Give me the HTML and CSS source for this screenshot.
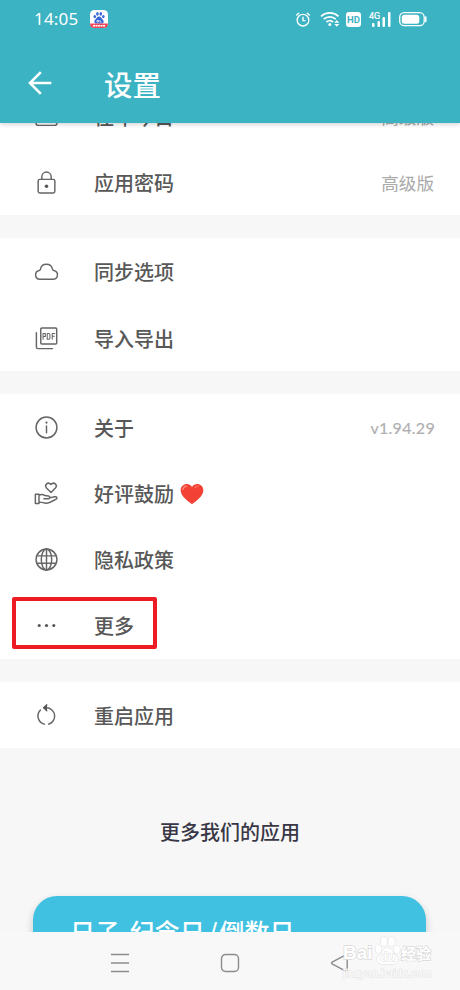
FILE: index.html
```html
<!DOCTYPE html>
<html lang="zh-CN">

<head>
    <meta charset="UTF-8">
    <meta name="viewport" content="width=device-width, initial-scale=1.0">
    <title>设置</title>
    <link rel="stylesheet" href="styles.css">
</head>

<body>
    <header class="header">
        <div class="status-bar">
            <span class="time">14:05</span>
            <svg class="app-badge" width="18" height="18" viewBox="0 0 18 18">
                <rect width="18" height="18" rx="4.5" fill="#fff" />
                <g fill="#3767d8">
                    <ellipse cx="4.8" cy="6.6" rx="1.3" ry="1.7" />
                    <ellipse cx="7.4" cy="3.9" rx="1.3" ry="1.8" />
                    <ellipse cx="10.8" cy="3.9" rx="1.3" ry="1.8" />
                    <ellipse cx="13.3" cy="6.6" rx="1.3" ry="1.7" />
                    <path d="M9 6.5c2 0 2.5 2 4 3.400 1.400 1.600.5 3.600-1.500 3.600h-5c-2 0-2.900-2-1.500-3.600C6.500 8.500 7 6.500 9 6.500z" />
                </g>
                <path d="M7 10.500h1.500v1.500H7zM10 10v2h1.500" fill="none" stroke="#fff" stroke-width=".7" />
                <path d="M0 13.500h18c0 3-1.500 4.500-4.500 4.500h-9C1.500 18 0 16.500 0 13.500z" fill="#f0475b" />
                <path d="M3 15.700h12" stroke="#fff" stroke-width="1.600" stroke-dasharray="2 .5" />
            </svg>
            <div class="status-icons">
                <svg class="alarm" width="16" height="18" viewBox="0 0 16 18" fill="none" stroke="#fff" stroke-width="1.400" stroke-linecap="round">
                    <circle cx="8" cy="10.200" r="5.800" />
                    <path d="M8 7.200v3.400h2M1.700 5l2-1.800M14.300 5l-2-1.800" />
                </svg>
                <svg class="wifi" width="21" height="18" viewBox="0 0 21 18" fill="none" stroke="#fff" stroke-width="1.700">
                    <path d="M1 6.300c5-4.500 12.500-4.500 17.500 0M3.700 9.200c3.500-3.200 8.600-3.200 12.100 0M6.500 12c1.900-1.700 4.700-1.700 6.600 0" />
                    <circle cx="9.800" cy="14.600" r="1.500" fill="#fff" stroke="none" />
                    <path d="M14.300 12.800l2.500-2.700 2.500 2.700zM14.300 14l2.500 2.700 2.500-2.700z" fill="#fff" stroke="none" />
                </svg>
                <span class="hd">HD</span>
                <svg class="signal" width="22" height="18" viewBox="0 0 22 18" fill="#fff">
                    <text x="0" y="9" class="signal-text">4G</text>
                    <rect x="3" y="13" width="2.500" height="4" rx="1" />
                    <rect x="8.500" y="11" width="2.500" height="6" rx="1" />
                    <rect x="13.500" y="7" width="2.500" height="10" rx="1" />
                    <rect x="19" y="2" width="2.500" height="15" rx="1" />
                </svg>
                <svg width="28" height="18" viewBox="0 0 28 18">
                    <rect x=".7" y="2.700" width="24.500" height="13" rx="4.500" fill="none" stroke="#fff" stroke-width="1.300" />
                    <rect x="2.800" y="4.700" width="17.500" height="9" rx="2.500" fill="#fff" />
                    <path d="M26.800 7v4.500" stroke="#fff" stroke-width="1.500" stroke-linecap="round" />
                </svg>
            </div>
        </div>
        <div class="toolbar">
            <svg width="24" height="24" viewBox="0 0 24 24" fill="none" stroke="#fff" stroke-width="2.600">
                <path d="M23.300 12H2M12.800 1.200L2 12l10.800 10.800" />
            </svg>
            <h1>设置</h1>
        </div>
    </header>

    <main class="content">
        <section class="group first">
            <div class="row">
                <svg class="icon" viewBox="0 0 24 24">
                    <rect x="2" y="2.500" width="20" height="18" rx="2" />
                    <path d="M2 8h20" />
                </svg>
                <span class="label">往年今日</span>
                <span class="value">高级版</span>
            </div>
            <div class="row">
                <svg class="icon" viewBox="0 0 24 24">
                    <rect x="4" y="9" width="16" height="13" rx="1.500" />
                    <path d="M7.500 9V6.500a4.500 4.500 0 0 1 9 0V9" />
                    <circle class="solid" cx="12" cy="15.500" r="1.700" />
                </svg>
                <span class="label">应用密码</span>
                <span class="value">高级版</span>
            </div>
        </section>

        <section class="group">
            <div class="row">
                <svg class="icon" viewBox="0 0 24 24">
                    <path d="M5.500 19.500h13.200a4.300 4.300 0 0 0 .3-8.500 1.600 1.600 0 0 1-1.300-1.300 5.900 5.900 0 0 0-11.500 0A1.600 1.600 0 0 1 5 11a4.300 4.300 0 0 0 .5 8.500z" />
                </svg>
                <span class="label">同步选项</span>
            </div>
            <div class="row">
                <svg class="icon" viewBox="0 0 24 24">
                    <rect x="6.500" y="2" width="15.300" height="15.300" rx="1" />
                    <path d="M2.300 6.500v13.700q0 1.500 1.500 1.500h14" />
                    <path class="thin" d="M8.700 12.800V7.200h2.200v2.800H8.700M12.700 7.200h1.300q1.300 0 1.300 1.300v3q0 1.300-1.300 1.300h-1.300zM17.500 12.800V7.200h2.500M17.500 9.800h2" />
                </svg>
                <span class="label">导入导出</span>
            </div>
        </section>

        <section class="group">
            <div class="row">
                <svg class="icon" viewBox="0 0 24 24">
                    <circle cx="12" cy="12" r="10" />
                    <path d="M12 10.500v6.500" />
                    <circle class="solid" cx="12" cy="7.300" r="1" />
                </svg>
                <span class="label">关于</span>
                <span class="value version">v1.94.29</span>
            </div>
            <div class="row">
                <svg class="icon" viewBox="0 0 24 24">
                    <path d="M16.300 11l-4.500-4.600c-2-2.400 1.500-6.300 4.500-3 3-3.300 6.500.6 4.500 3z" />
                    <path d="M1.300 12.800h3.500v8.700H1.300zM4.800 13.800c2-1.300 4-1 5.700.2l3.300.4c2 .3 2 2.600 0 2.600H9.500M14.800 16.200l5-1.100c2.300-.4 3 1.700 1.200 2.500-3.800 2.200-6.700 3.900-9.600 3.700-2.400-.2-4-1.300-6.600-1" />
                </svg>
                <span class="label">好评鼓励</span>
                <svg class="heart" width="24" height="22" viewBox="0 0 24 22">
                    <path d="M12 21.300C8.500 18.200.7 13.600.7 7.200.7 1 8.600-1.200 12 4c3.400-5.200 11.300-3 11.300 3.200 0 6.400-7.800 11-11.300 14.100z" fill="#f34235" />
                    <path d="M3 6.500c.3-2 1.500-3.200 3.300-3.200" fill="none" stroke="#ff8177" stroke-width="1.600" stroke-linecap="round" />
                    <path d="M15 4.800c1-1.300 2-1.700 3.300-1.700" fill="none" stroke="#ff6f64" stroke-width="1.400" stroke-linecap="round" />
                </svg>
            </div>
            <div class="row">
                <svg class="icon" viewBox="0 0 24 24">
                    <circle cx="12" cy="12" r="10" />
                    <ellipse cx="12" cy="12" rx="5" ry="10" />
                    <path d="M12 2v20M3.300 8.500h17.400M3.300 15.500h17.400" />
                </svg>
                <span class="label">隐私政策</span>
            </div>
            <div class="row">
                <svg class="icon" viewBox="0 0 24 24">
                    <circle class="solid" cx="5" cy="12" r="1.500" />
                    <circle class="solid" cx="12" cy="12" r="1.500" />
                    <circle class="solid" cx="19" cy="12" r="1.500" />
                </svg>
                <span class="label">更多</span>
                <div class="highlight"></div>
            </div>
        </section>

        <section class="group">
            <div class="row">
                <svg class="icon" viewBox="0 0 24 24">
                    <path d="M6.200 6.800A8 8 0 0 0 10 20.300M14 20.300a8 8 0 0 0-2-15.700h-2" />
                    <path d="M12.300 1.800L9.300 4.600l3 2.800" />
                    <path class="solid" d="M12.500 1.500v6.200L8.700 4.600z" />
                </svg>
                <span class="label">重启应用</span>
            </div>
        </section>

        <h2 class="more-title">更多我们的应用</h2>
        <div class="app-card">日子 纪念日<span class="slash">/</span>倒数日</div>
    </main>

    <footer class="nav-bar">
        <svg width="20" height="20" viewBox="0 0 20 20">
            <path d="M1 1.500h18M1 10h18M1 18.500h18" />
        </svg>
        <svg width="20" height="20" viewBox="0 0 20 20">
            <rect x="1.500" y="1.500" width="17" height="17" rx="4" />
        </svg>
        <svg width="20" height="20" viewBox="0 0 20 20">
            <path d="M2.500 8.800L15.700 2q1.500-.6 1.500 1v14q0 1.600-1.500 1L2.500 11.200q-1.800-1.200 0-2.400z" />
        </svg>
        <div class="watermark">
            <div class="brand">
                <span class="bai">Bai</span>
                <svg viewBox="0 0 27 30">
                    <ellipse cx="4.500" cy="13" rx="3" ry="4" />
                    <ellipse cx="10" cy="5.500" rx="3.300" ry="4.500" />
                    <ellipse cx="17.500" cy="5.500" rx="3.300" ry="4.500" />
                    <ellipse cx="23" cy="13.500" rx="3" ry="4" />
                    <path d="M13.500 12c4 0 5 4 8.500 7 4 4 1.500 9-3 9H8c-4.500 0-7-5-3-9 3.500-3 4.500-7 8.500-7z" />
                    <text x="13.500" y="25" text-anchor="middle">du</text>
                </svg>
                <span class="cn">经验</span>
            </div>
            <div class="site">jingyan.baidu.com</div>
        </div>
    </footer>
</body>

</html>
```
FILE: styles.css
```css
* {
    box-sizing: border-box;
}

body {
    margin: 0;
    width: 460px;
    height: 990px;
    overflow: hidden;
    display: flex;
    flex-direction: column;
    background: #f7f7f7;
    font-family: "Noto Sans CJK SC", sans-serif;
    color: #585858;
}

.header {
    position: relative;
    z-index: 1;
    height: 123px;
    flex: none;
    background: #3bb3c2;
    box-shadow: 0 1px 5px rgba(0, 0, 0, 0.2);
    color: #fff;
}

.status-bar {
    display: flex;
    align-items: center;
    height: 38px;
    padding: 0 33px 0 34px;
}

.time {
    width: 56px;
    font-family: "Noto Sans", sans-serif;
    font-size: 17px;
    letter-spacing: 0.2px;
    line-height: 38px;
}

.status-icons {
    display: flex;
    align-items: center;
    margin-left: auto;
}

.alarm {
    margin-right: 1px;
}

.wifi {
    margin-left: 8px;
}

.hd {
    width: 15px;
    height: 15px;
    margin-left: 5px;
    border-radius: 3px;
    background: #fff;
    color: #3bb3c2;
    font: bold 9.5px/15px Roboto, sans-serif;
    text-align: center;
}

.signal {
    margin: 0 8px;
}

.signal-text {
    font: 9px Roboto, sans-serif;
    stroke: #fff;
    stroke-width: 0.2;
}

.toolbar {
    display: flex;
    align-items: center;
    height: 90px;
    padding-left: 28px;
}

.toolbar h1 {
    margin: 1px 0 0 52px;
    font-size: 28.4px;
    font-weight: 500;
    line-height: 40px;
}

.content {
    height: 809px;
    flex: none;
    overflow: hidden;
}

.group {
    margin-bottom: 23px;
    background: #fff;
}

.group.first {
    margin-top: -40px;
}

.row {
    position: relative;
    display: flex;
    align-items: center;
    height: 66.2px;
    padding: 0 25px 0 34px;
}

.icon {
    width: 25px;
    height: 25px;
    margin: 1px 35px 0 0;
    fill: none;
    stroke: #666;
    stroke-width: 1.4;
    stroke-linecap: round;
    stroke-linejoin: round;
}

.icon .solid {
    fill: #555;
    stroke: none;
}

.icon .thin {
    stroke-width: 1;
}

.label {
    padding-top: 2px;
    font-size: 20px;
    font-weight: 500;
    line-height: 30px;
}

.value {
    margin-left: auto;
    padding-right: 1px;
    font-size: 17.6px;
    color: #aaa;
}

.version {
    padding: 1px 0 0;
    font-family: Lato, sans-serif;
    font-size: 16px;
    letter-spacing: 0.3px;
    color: #b0b0b0;
    -webkit-text-stroke: 0.2px #b0b0b0;
}

.heart {
    margin: 1px 0 0 6px;
}

/* red marker around the last row of the group */
.highlight {
    position: absolute;
    left: 12px;
    top: 5px;
    width: 145px;
    height: 52px;
    border: 4px solid #ed1c24;
    border-radius: 2px;
}

.more-title {
    margin: 69px 0 49px;
    font-size: 20px;
    font-weight: 500;
    line-height: 30px;
    text-align: center;
    color: #393746;
}

.app-card {
    height: 160px;
    margin: 0 34px 0 33px;
    padding: 17px 37px;
    border-radius: 24px;
    background: #40c1e2;
    box-shadow: 0 4px 8px rgba(0, 0, 0, 0.2);
    color: #fff;
    font-size: 25px;
    font-weight: 500;
    line-height: 36px;
    word-spacing: 4px;
}

.slash {
    margin: 0 2px 0 3px;
}

.nav-bar {
    position: relative;
    display: flex;
    align-items: center;
    gap: 90px;
    height: 58px;
    padding: 4px 0 0 110px;
    background: #f8f8f8;
}

.nav-bar > svg {
    fill: none;
    stroke: #8c8c8c;
    stroke-width: 1.4;
}

.watermark {
    position: absolute;
    left: 343px;
    top: 3px;
    color: #fff;
    -webkit-text-stroke: 1.4px #dadada;
    paint-order: stroke fill;
}

.brand {
    display: flex;
    align-items: flex-end;
    width: 90px;
    height: 31px;
    font: bold 19px/26px "Liberation Sans", sans-serif;
}

.brand .bai {
    width: 31px;
}

.brand svg {
    flex: none;
    width: 27px;
    height: 30px;
    fill: #fff;
    stroke: #d5d5d5;
    stroke-width: 0.8;
}

.brand text {
    font-size: 13px;
}

.brand .cn {
    font-family: "Noto Sans CJK SC", sans-serif;
    font-size: 15px;
}

.site {
    font: 11px/14px "Liberation Sans", sans-serif;
    -webkit-text-stroke: 1px #e2e2e2;
}
```
